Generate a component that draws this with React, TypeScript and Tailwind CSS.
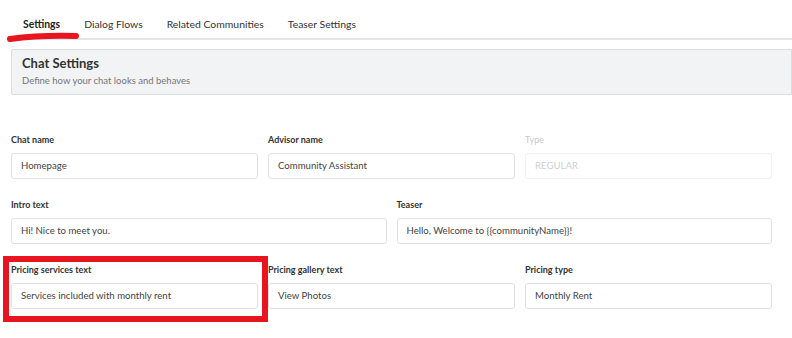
import React from "react";

const font = { fontFamily: "Lato, 'Open Sans', sans-serif" };

function Field({
  label,
  value,
  disabled,
}: {
  label: string;
  value: string;
  disabled?: boolean;
}) {
  return (
    <div className="flex flex-col">
      <div
        className={`text-[9px] leading-[12px] font-bold pt-[1px] mb-[7px] ${
          disabled ? "text-[#c8c8c8] font-normal" : "text-[#333]"
        }`}
      >
        {label}
      </div>
      <div
        className={`h-[26px] rounded-[3px] border flex items-center px-[9px] text-[9.6px] ${
          disabled
            ? "border-[#f0f0f0] text-[#cfcfcf]"
            : "border-[#e2e2e2] text-[#444]"
        }`}
      >
        {value}
      </div>
    </div>
  );
}

export default function App() {
  return (
    <div className="w-[792px] h-[338px] bg-white overflow-hidden relative" style={font}>
      {/* Tabs */}
      <div className="relative h-[40px] pt-[17px]">
        <div className="flex pl-[11px] text-[10.4px] leading-[14px] text-[#333]">
          <div className="px-[12px] font-bold text-[#222]">Settings</div>
          <div className="px-[12px]">Dialog Flows</div>
          <div className="px-[12px]">Related Communities</div>
          <div className="px-[12px]">Teaser Settings</div>
        </div>
        <div className="absolute left-[8px] right-0 top-[38px] h-[2px] bg-[#e6e6e6]" />
        <svg className="absolute left-0 top-[28px]" width="90" height="20">
          <path
            d="M10 11 Q40 7 76 8"
            stroke="#e8141f"
            strokeWidth="6"
            strokeLinecap="round"
            fill="none"
          />
        </svg>
      </div>

      {/* Panel */}
      <div className="ml-[11px] mt-[9px] h-[46px] bg-[#f2f3f5] border border-[#dcdcdc] rounded-l-[2px] pl-[10px] pt-[4px]">
        <div className="text-[13px] leading-[18px] font-bold text-[#333]">Chat Settings</div>
        <div className="text-[9.5px] leading-[13px] mt-[2px] text-[#777]">Define how your chat looks and behaves</div>
      </div>

      {/* Form */}
      <div className="ml-[11px] w-[761px] mt-[38px] flex flex-col gap-[19px]">
        <div className="grid grid-cols-3 gap-[10px]">
          <Field label="Chat name" value="Homepage" />
          <Field label="Advisor name" value="Community Assistant" />
          <Field label="Type" value="REGULAR" disabled />
        </div>
        <div className="grid grid-cols-2 gap-[10px]">
          <Field label="Intro text" value="Hi! Nice to meet you." />
          <Field label="Teaser" value="Hello, Welcome to {{communityName}}!" />
        </div>
        <div className="grid grid-cols-3 gap-[10px]">
          <div className="relative">
            <Field label="Pricing services text" value="Services included with monthly rent" />
            <div className="absolute left-[-8px] top-[-7px] right-[-10px] bottom-[-13px] border-[6px] border-[#e8141f]" />
          </div>
          <Field label="Pricing gallery text" value="View Photos" />
          <Field label="Pricing type" value="Monthly Rent" />
        </div>
      </div>
    </div>
  );
}
